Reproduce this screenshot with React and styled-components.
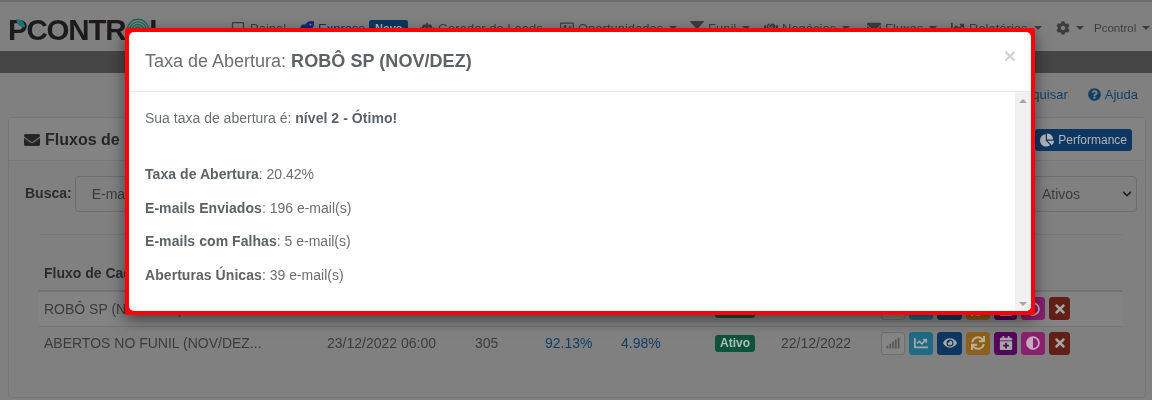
import React from 'react';
import styled, { createGlobalStyle } from 'styled-components';
import {
  FaRegSquare, FaRocket, FaRobot, FaRegAddressCard, FaFilter, FaHandshake, FaEnvelope,
  FaChartLine, FaCog, FaQuestionCircle, FaChartPie, FaSignal, FaEye, FaSync,
  FaCalendarPlus, FaAdjust, FaTimes, FaChevronDown,
} from 'react-icons/fa';

const GlobalStyle = createGlobalStyle`
  html, body {
    margin: 0;
    padding: 0;
    height: 400px;
    overflow: hidden;
    background: #808080;
  }
  * { box-sizing: border-box; }
  body {
    font-family: "Liberation Sans", Arial, sans-serif;
    font-size: 14px;
    color: #383838;
  }
`;

const Page = styled.div`
  position: relative;
  width: 1152px;
  height: 400px;
  overflow: hidden;
  border-top: 2px solid #6b6b73;
  background: #808080;
  filter: blur(0.35px);
`;

const Header = styled.header`
  display: flex;
  align-items: flex-start;
  height: 49px;
  padding-left: 8px;
`;

const Logo = styled.div`
  position: relative;
  display: flex;
  align-items: center;
  width: 223px;
  height: 24px;
  margin-top: 16px;
  font-size: 29.5px;
  line-height: 24px;
  font-weight: 700;
  letter-spacing: -1.2px;
  color: #1c1a1a;
`;

const LogoLeaf = styled.svg`
  position: absolute;
  top: 1px;
  left: 8px;
  width: 9px;
  height: 9px;
`;

const LogoMark = styled.svg`
  flex: none;
  width: 24px;
  height: 24px;
  margin: 0 -1px 0 1px;
`;

const Nav = styled.nav`
  display: flex;
  align-items: center;
  height: 20px;
  margin-top: 16px;
  font-size: 13px;
  color: #3d3d3d;
`;

const NavItem = styled.div`
  display: flex;
  align-items: center;
  flex: none;
  gap: ${(p) => p.$gap || 4}px;
  width: ${(p) => p.$w}px;
  white-space: nowrap;
  color: ${(p) => (p.$accent ? '#0f2a78' : 'inherit')};
  font-size: ${(p) => (p.$small ? 11.5 : 13)}px;
  svg { flex: none; font-size: 14px; }
`;

const Caret = styled.span`
  flex: none;
  width: 0;
  height: 0;
  margin-left: 2px;
  border-top: 4px solid currentColor;
  border-left: 4px solid transparent;
  border-right: 4px solid transparent;
`;

const NewBadge = styled.span`
  padding: 1px 6px;
  border-radius: 2px;
  background: #0d3760;
  color: #a9b4bf;
  font-size: 11px;
  font-weight: 700;
  line-height: 14px;
`;

const DarkBar = styled.div`
  height: 22px;
  background: #454545;
`;

const SubNav = styled.div`
  display: flex;
  justify-content: flex-end;
  align-items: center;
  gap: 20px;
  height: 44px;
  padding: 0 14px 2px 0;
  font-size: 13px;
  color: #103f66;
`;

const SubLink = styled.span`
  display: inline-flex;
  align-items: center;
  gap: 4px;
  svg { font-size: 13px; }
`;

const Panel = styled.section`
  margin: 0 6px 0 8px;
  height: 281px;
  border: 1px solid #747678;
  border-radius: 4px;
`;

const PanelHeader = styled.div`
  display: flex;
  align-items: center;
  justify-content: space-between;
  height: 43px;
  padding: 2px 13px 0 15px;
  background: #838383;
  border-bottom: 1px solid #777a7d;
`;

const PanelTitle = styled.h3`
  display: flex;
  align-items: center;
  gap: 5px;
  margin: 0;
  font-size: 16px;
  font-weight: 700;
  color: #262626;
  svg { font-size: 16px; }
`;

const PerformanceButton = styled.button`
  display: inline-flex;
  align-items: center;
  gap: 4px;
  height: 22px;
  padding: 0 5px;
  border: 0;
  border-radius: 3px;
  background: #0d3760;
  color: #b0b5ba;
  font: 12px "Liberation Sans", Arial, sans-serif;
  svg { font-size: 14px; }
`;

const SearchRow = styled.div`
  display: flex;
  align-items: center;
  gap: 3px;
  height: 36px;
  margin: 15px 8px 0 16px;
`;

const SearchLabel = styled.label`
  margin-top: -2px;
  font-size: 14px;
  font-weight: 700;
  color: #2c2c2c;
`;

const TextField = styled.div`
  flex: 1;
  height: 36px;
  padding: 0 16px;
  border: 1px solid #6c6e70;
  border-radius: 4px;
  line-height: 34px;
  color: #3c3c3c;
`;

const SelectField = styled(TextField)`
  display: flex;
  align-items: center;
  justify-content: space-between;
  flex: none;
  width: 300px;
  padding: 0 4px 0 204px;
  svg { font-size: 10px; color: #222; }
`;

const Rule = styled.hr`
  height: 1px;
  margin: 22px 23px 0 30px;
  border: 0;
  background: #76787a;
`;

const Table = styled.table`
  width: 1083px;
  margin: 21px 0 0 30px;
  border-collapse: collapse;
  table-layout: fixed;
  font-size: 14px;
  color: #3c3c3c;
`;

const HeadCell = styled.th`
  height: 35px;
  padding: 0 5px;
  border-bottom: 2px solid #707274;
  font-weight: 700;
  text-align: left;
  white-space: nowrap;
  overflow: hidden;
  color: #2b2b2b;
`;

const Row = styled.tr`
  height: ${(p) => p.$h}px;
  background: ${(p) => (p.$shaded ? '#838383' : 'transparent')};
`;

const Cell = styled.td`
  padding: 0 5px;
  white-space: nowrap;
  overflow: hidden;
  border-bottom: ${(p) => (p.$lined ? '1px solid #727476' : '0')};
  color: ${(p) => (p.$link ? '#103f66' : 'inherit')};
`;

const Status = styled.span`
  display: inline-block;
  width: 40px;
  height: 17px;
  border-radius: 3px;
  background: #0d533b;
  color: #b0bdb6;
  font-size: 12px;
  font-weight: 700;
  line-height: 17px;
  text-align: center;
`;

const Actions = styled.div`
  display: flex;
  gap: 4px;
`;

const ActionButton = styled.span`
  display: flex;
  align-items: center;
  justify-content: center;
  flex: none;
  width: ${(p) => p.$w || 24}px;
  height: 23px;
  border-radius: 3px;
  background: ${(p) => p.$bg};
  border: 1px solid ${(p) => p.$edge || p.$bg};
  color: ${(p) => p.$fg || '#a6a6a6'};
  font-size: 14px;
`;

const ModalFrame = styled.div`
  position: absolute;
  top: 26px;
  left: 125px;
  width: 910px;
  height: 287px;
  padding: 4px;
  background: #fe0000;
  border-radius: 2px;
  box-shadow: 0 5px 15px rgba(0, 0, 0, 0.5);
`;

const Modal = styled.div`
  display: flex;
  flex-direction: column;
  height: 100%;
  background: #fff;
  border-radius: 5px;
  overflow: hidden;
`;

const ModalHeader = styled.div`
  display: flex;
  align-items: flex-start;
  justify-content: space-between;
  flex: none;
  height: 60px;
  padding: 0 15px 0 16px;
  border-bottom: 1px solid #e9e9e9;
`;

const ModalTitle = styled.h4`
  margin: 17px 0 0;
  font-size: 18px;
  line-height: 24px;
  font-weight: 400;
  color: #6b6f72;
  b { font-weight: 700; color: #5c6265; letter-spacing: 0.06px; }
`;

const CloseMark = styled.span`
  margin: 13px 0 0;
  color: #d2d2d2;
  font-size: 21px;
  line-height: 21px;
  font-weight: 700;
`;

const ModalMain = styled.div`
  display: flex;
  flex: 1;
  min-height: 0;
`;

const ModalBody = styled.div`
  flex: 1;
  padding: 17px 15px 0 16px;
  font-size: 14px;
  line-height: 18px;
  color: #6b6f72;
  b { color: #5c6265; letter-spacing: 0.06px; }
`;

const Paragraph = styled.p`
  margin: 0 0 ${(p) => p.$after || 15.7}px;
`;

const ScrollTrack = styled.div`
  display: flex;
  flex-direction: column;
  justify-content: space-between;
  align-items: center;
  flex: none;
  width: 16px;
  padding: 7px 0 5px;
  background: #f1f1f1;
`;

const ScrollArrow = styled.span`
  width: 0;
  height: 0;
  border-left: 4px solid transparent;
  border-right: 4px solid transparent;
  border-top: ${(p) => (p.$down ? '4px solid #a3a3a3' : '0')};
  border-bottom: ${(p) => (p.$down ? '0' : '4px solid #a3a3a3')};
`;

const navItems = [
  { w: 120, icon: <FaRocket />, label: 'Express', accent: true, badge: 'Novo' },
  { w: 140, icon: <FaRobot />, label: 'Gerador de Leads' },
  { w: 130, icon: <FaRegAddressCard />, label: 'Oportunidades', caret: true },
  { w: 74, icon: <FaFilter />, label: 'Funil', caret: true },
  { w: 103, icon: <FaHandshake />, label: 'Negócios', caret: true },
  { w: 84, icon: <FaEnvelope />, label: 'Fluxos', caret: true },
  { w: 105, icon: <FaChartLine />, label: 'Relatórios', caret: true },
];

const rowActions = [
  { icon: <FaSignal />, bg: '#858585', edge: '#6e6e6e', fg: '#565656' },
  { icon: <FaChartLine />, bg: '#1f6a84' },
  { icon: <FaEye />, bg: '#0d3760', w: 25 },
  { icon: <FaSync />, bg: '#8b601c', fg: '#bcae90' },
  { icon: <FaCalendarPlus />, bg: '#530758', w: 23 },
  { icon: <FaAdjust />, bg: '#8b206c', fg: '#c8aac0' },
  { icon: <FaTimes />, bg: '#602018', w: 21 },
];

const flows = [
  { name: 'ROBÔ SP (NOV/DEZ)', sent: '23/12/2022 06:00', total: '196', open: '79.59%', rate: '20.42%', date: '22/12/2022', h: 35, shaded: true, lined: true },
  { name: 'ABERTOS NO FUNIL (NOV/DEZ...', sent: '23/12/2022 06:00', total: '305', open: '92.13%', rate: '4.98%', date: '22/12/2022', h: 34 },
];

const columns = [283, 148, 70, 76, 94, 66, 100, 246];

export default function App() {
  return (
    <>
      <GlobalStyle />
      <Page>
        <Header>
          <Logo>
            PCONTR
            <LogoLeaf viewBox="0 0 9 9">
              <path d="M0 0 C5 0 9 3 9 8 C5 9 1 6 0 0 Z" fill="#1f6f78" />
            </LogoLeaf>
            <LogoMark viewBox="0 0 28 28">
              <g fill="none" stroke="#1d6b5c" strokeWidth="1.7">
                <circle cx="14" cy="14" r="12.5" />
                <circle cx="14" cy="14" r="9.5" />
                <circle cx="14" cy="14" r="6.5" />
                <circle cx="14" cy="14" r="3.5" />
              </g>
            </LogoMark>
            L
          </Logo>
          <Nav>
            <NavItem $w={69} $gap={5}><FaRegSquare />Painel</NavItem>
            {navItems.map((item) => (
              <NavItem key={item.label} $w={item.w} $accent={item.accent}>
                {item.icon}
                {item.label}
                {item.badge && <NewBadge>{item.badge}</NewBadge>}
                {item.caret && <Caret />}
              </NavItem>
            ))}
            <NavItem $w={38} $gap={0}><FaCog /><Caret /></NavItem>
            <NavItem $w={56} $small>Pcontrol<Caret /></NavItem>
          </Nav>
        </Header>
        <DarkBar />
        <SubNav>
          <SubLink>Pesquisar</SubLink>
          <SubLink><FaQuestionCircle />Ajuda</SubLink>
        </SubNav>
        <Panel>
          <PanelHeader>
            <PanelTitle><FaEnvelope />Fluxos de Cadência</PanelTitle>
            <PerformanceButton><FaChartPie />Performance</PerformanceButton>
          </PanelHeader>
          <SearchRow>
            <SearchLabel>Busca:</SearchLabel>
            <TextField>E-mail</TextField>
            <SelectField>Ativos<FaChevronDown /></SelectField>
          </SearchRow>
          <Rule />
          <Table>
            <colgroup>
              {columns.map((w, i) => <col key={i} width={w} />)}
            </colgroup>
            <thead>
              <tr>
                <HeadCell>Fluxo de Cadência</HeadCell>
                <HeadCell>Envio</HeadCell>
                <HeadCell>Total</HeadCell>
                <HeadCell>Entrega</HeadCell>
                <HeadCell>Abertura</HeadCell>
                <HeadCell>Status</HeadCell>
                <HeadCell>Criação</HeadCell>
                <HeadCell>Ações</HeadCell>
              </tr>
            </thead>
            <tbody>
              {flows.map((flow) => (
                <Row key={flow.name} $h={flow.h} $shaded={flow.shaded}>
                  <Cell $lined={flow.lined}>{flow.name}</Cell>
                  <Cell $lined={flow.lined}>{flow.sent}</Cell>
                  <Cell $lined={flow.lined}>{flow.total}</Cell>
                  <Cell $lined={flow.lined} $link>{flow.open}</Cell>
                  <Cell $lined={flow.lined} $link>{flow.rate}</Cell>
                  <Cell $lined={flow.lined}><Status>Ativo</Status></Cell>
                  <Cell $lined={flow.lined}>{flow.date}</Cell>
                  <Cell $lined={flow.lined}>
                    <Actions>
                      {rowActions.map((a, i) => (
                        <ActionButton key={i} $bg={a.bg} $edge={a.edge} $fg={a.fg} $w={a.w}>{a.icon}</ActionButton>
                      ))}
                    </Actions>
                  </Cell>
                </Row>
              ))}
            </tbody>
          </Table>
        </Panel>
        <ModalFrame>
          <Modal>
            <ModalHeader>
              <ModalTitle>Taxa de Abertura: <b>ROBÔ SP (NOV/DEZ)</b></ModalTitle>
              <CloseMark>×</CloseMark>
            </ModalHeader>
            <ModalMain>
              <ModalBody>
                <Paragraph $after={38}>Sua taxa de abertura é: <b>nível 2 - Ótimo!</b></Paragraph>
                <Paragraph><b>Taxa de Abertura</b>: 20.42%</Paragraph>
                <Paragraph><b>E-mails Enviados</b>: 196 e-mail(s)</Paragraph>
                <Paragraph><b>E-mails com Falhas</b>: 5 e-mail(s)</Paragraph>
                <Paragraph><b>Aberturas Únicas</b>: 39 e-mail(s)</Paragraph>
              </ModalBody>
              <ScrollTrack>
                <ScrollArrow />
                <ScrollArrow $down />
              </ScrollTrack>
            </ModalMain>
          </Modal>
        </ModalFrame>
      </Page>
    </>
  );
}
